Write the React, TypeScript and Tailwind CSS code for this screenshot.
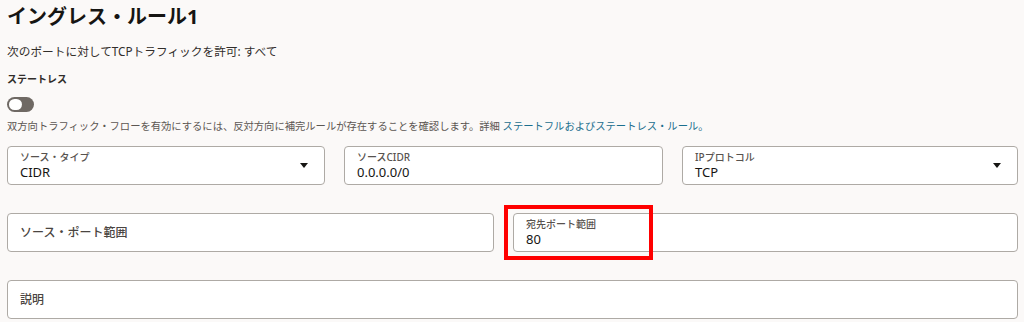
import React from "react";

const font = { fontFamily: '"Noto Sans", "Noto Sans CJK JP", sans-serif' };

function Caret() {
  return (
    <svg width="8" height="5" viewBox="0 0 8 5" className="shrink-0">
      <path d="M0 0 H8 L4 5 Z" fill="#161513" />
    </svg>
  );
}

function Field({ label, value, select }: { label: string; value: string; select?: boolean }) {
  return (
    <div className="h-[39px] bg-white border border-[#aeaaa5] rounded-[4px] flex items-center pl-[12px] pr-[16px]">
      <div className="flex-1 flex flex-col">
        <div className="text-[10px] leading-[13px] text-[#57524e] font-medium">{label}</div>
        <div className="text-[13px] leading-[16px] text-[#161513]">{value}</div>
      </div>
      {select && <Caret />}
    </div>
  );
}

function Placeholder({ text }: { text: string }) {
  return (
    <div className="h-[39px] bg-white border border-[#aeaaa5] rounded-[4px] flex items-center pl-[12px]">
      <span className="text-[12px] text-[#4a4541] font-medium">{text}</span>
    </div>
  );
}

export default function App() {
  return (
    <div className="w-[1024px] h-[322px] bg-[#fbf9f8] overflow-hidden pl-[7px] pr-[6px] pt-[5px]" style={font}>
      <div className="text-[20px] leading-[24px] font-bold text-[#161513]">イングレス・ルール1</div>
      <div className="mt-[14px] text-[11.7px] leading-[16px] text-[#312d2a]">次のポートに対してTCPトラフィックを許可: すべて</div>
      <div className="mt-[13px] text-[10px] leading-[14px] font-semibold text-[#312d2a]">ステートレス</div>
      <div className="mt-[11px] w-[27px] h-[15px] rounded-full bg-[#6f6964] flex items-center pl-[2px]">
        <div className="w-[13px] h-[11px] rounded-full bg-white" />
      </div>
      <div className="mt-[7px] text-[10.3px] leading-[14px] text-[#5b5652] whitespace-nowrap">
        双方向トラフィック・フローを有効にするには、反対方向に補完ルールが存在することを確認します。詳細{" "}
        <span className="text-[#1b6f8e]">ステートフルおよびステートレス・ルール。</span>
      </div>
      <div className="mt-[13px] grid grid-cols-[318px_319px_1fr] gap-[19px]">
        <Field label="ソース・タイプ" value="CIDR" select />
        <Field label="ソースCIDR" value="0.0.0.0/0" />
        <Field label="IPプロトコル" value="TCP" select />
      </div>
      <div className="mt-[28px] grid grid-cols-[487px_1fr] gap-[19px]">
        <Placeholder text="ソース・ポート範囲" />
        <div className="relative">
          <Field label="宛先ポート範囲" value="80" />
          <div className="absolute left-[-9px] top-[-8px] w-[149px] h-[55px] border-4 border-[#ff0000]" />
        </div>
      </div>
      <div className="mt-[28px]">
        <Placeholder text="説明" />
      </div>
    </div>
  );
}
